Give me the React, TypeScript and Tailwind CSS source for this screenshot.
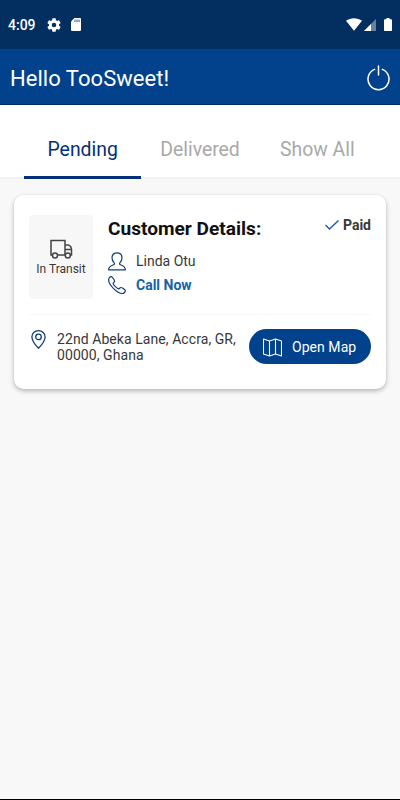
/**
 * Delivery driver home screen: status bar, greeting header, tabs and an order card
 */

interface Order {
  status: string;
  customer: string;
  address: string;
  payment: string;
}

const tabs = ["Pending", "Delivered", "Show All"];

const order: Order = {
  status: "In Transit",
  customer: "Linda Otu",
  address: "22nd Abeka Lane, Accra, GR, 00000, Ghana",
  payment: "Paid",
};

function StatusBar() {
  return (
    <div className="flex h-[49px] shrink-0 items-center bg-[#022f60] pt-px pr-2 pl-2 text-white">
      <span className="w-[39px] text-[14px] leading-4 font-medium whitespace-nowrap">4:09</span>
      {/* Settings */}
      <svg className="-mt-px h-[14px] w-[14px]" viewBox="2 2 20 20" fill="currentColor">
        <path d="M19.14 12.94c.04-.3.06-.61.06-.94s-.02-.64-.07-.94l2.03-1.58a.49.49 0 0 0 .12-.61l-1.92-3.32a.49.49 0 0 0-.59-.22l-2.39.96a7 7 0 0 0-1.62-.94l-.36-2.54a.48.48 0 0 0-.48-.41h-3.84a.47.47 0 0 0-.47.41l-.36 2.54c-.59.24-1.13.57-1.62.94l-2.39-.96a.48.48 0 0 0-.59.22L2.74 8.87a.47.47 0 0 0 .12.61l2.03 1.58a7 7 0 0 0 0 1.88l-2.03 1.58a.49.49 0 0 0-.12.61l1.92 3.32c.12.22.37.29.59.22l2.39-.96c.5.38 1.03.7 1.62.94l.36 2.54c.05.24.24.41.48.41h3.84c.24 0 .44-.17.47-.41l.36-2.54a7 7 0 0 0 1.62-.94l2.39.96c.22.08.47 0 .59-.22l1.92-3.32a.47.47 0 0 0-.12-.61zM12 15.3a3.3 3.3 0 1 1 0-6.6 3.3 3.3 0 0 1 0 6.6z" />
      </svg>
      {/* SD card */}
      <svg className="-mt-px ml-[10px] h-[13px] w-[10px]" viewBox="0 0 10 13">
        <path fill="currentColor" d="M3.4 0H9a1 1 0 0 1 1 1v11a1 1 0 0 1-1 1H1a1 1 0 0 1-1-1V3.4z" />
        <path stroke="#022f60" strokeWidth=".8" d="M4 1.5v2.7M6 1.5v2.7M8 1.5v2.7" />
      </svg>
      {/* Wifi, signal and battery */}
      <svg className="-mt-px ml-auto h-[13px] w-[16px]" viewBox="0 0 16 13" fill="currentColor">
        <path d="M0 2.8C4.5-.7 11.5-.7 16 2.8L8 12.8z" />
      </svg>
      <svg className="ml-[2px] h-[12px] w-[12px]" viewBox="0 0 12 12" fill="currentColor">
        <path opacity=".4" d="M0 12 12 0v12z" />
        <path d="M0 12 7 5v7z" />
      </svg>
      <svg className="-mt-px ml-[8px] h-[13px] w-[8px]" viewBox="0 0 8 13" fill="currentColor">
        <path d="M2.4 0h3.2v1.3h1.6a.8.8 0 0 1 .8.8v10.1a.8.8 0 0 1-.8.8H.8a.8.8 0 0 1-.8-.8V2.1a.8.8 0 0 1 .8-.8h1.6z" />
      </svg>
    </div>
  );
}

function Header() {
  return (
    <header className="flex h-[56px] shrink-0 items-center justify-between border-b border-[#022566] bg-[#02418c] px-[10px] pt-[3px] text-white">
      <h1 className="pt-[2px] text-[22px] leading-7 tracking-[0.04px]">Hello TooSweet!</h1>
      <svg className="h-[26px] w-[23px]" viewBox="0 0 23 26" fill="none" stroke="currentColor" strokeWidth="1.5" strokeLinecap="round">
        <path d="M7.6 4.4a10.5 10.5 0 1 0 7.8 0" />
        <path d="M11.5 1v9" />
      </svg>
    </header>
  );
}

function Tabs() {
  return (
    <nav className="flex h-[74px] shrink-0 items-end border-b-2 border-[#f1f1f1] bg-white px-6 text-center text-[19.4px]">
      {tabs.map((tab, index) => (
        <div
          key={tab}
          className={
            index === 0
              ? "-mb-[2px] h-[59px] flex-1 border-b-[3px] border-[#02307a] pt-[15px] leading-[30px] text-[#02307a]"
              : "-mb-[2px] h-[59px] flex-1 pt-[15px] leading-[30px] text-[#a9a9a9]"
          }
        >
          {tab}
        </div>
      ))}
    </nav>
  );
}

function OrderCard({ order }: { order: Order }) {
  return (
    <section className="mx-[14px] mt-[16px] h-[194px] rounded-[10px] bg-white px-[15px] pt-5 text-[#383838] shadow-[0_2px_5px_rgba(0,0,0,0.28)]">
      <div className="flex h-[100px] border-b border-[#f8f8f8]">
        <div className="flex h-[84px] w-[64px] flex-col items-center rounded-[4px] bg-[#f7f7f7] pt-[24px]">
          <svg className="h-[20px] w-[23px]" viewBox="0 0 23 20" fill="none" stroke="#444" strokeWidth="1.5">
            <path d="M2.5 16H1V1.5h14V16M7.5 16h7.8M15 6h3c2 0 3.500 2.500 3.500 4.500V16h-1.200M15 10.5h6.5" />
            <circle cx="5" cy="16.500" r="2.500" />
            <circle cx="17.800" cy="16.500" r="2.500" />
          </svg>
          <span className="mt-[2px] text-[12px] leading-4 whitespace-nowrap">{order.status}</span>
        </div>

        <div className="ml-[15px] flex-1">
          <h2 className="pt-px text-[19.1px] leading-[26px] font-bold whitespace-nowrap text-[#111]">Customer Details:</h2>
          <div className="mt-[7px] flex h-6 items-center">
            <svg className="h-[19px] w-[18px]" viewBox="0 0 18 19" fill="none" stroke="#123e7d" strokeWidth="1.2" strokeLinejoin="round">
              <path d="M9 .8c3.2 0 5 2.100 5 5 0 2.300-.9 4-2.100 5-.5.600-.5 1.400.1 1.800 1.100.7 5.400 1.300 5.400 5.200H.6c0-3.900 4.300-4.500 5.400-5.200.6-.4.6-1.200.1-1.800C4.900 9.800 4 8.100 4 5.800c0-2.900 1.800-5 5-5z" />
            </svg>
            <span className="ml-[10px] text-[14px]">{order.customer}</span>
          </div>
          <div className="flex h-6 items-center">
            <svg className="h-[18px] w-[18px]" viewBox="0 0 18 18" fill="none" stroke="#123e7d" strokeWidth="1.2" strokeLinejoin="round">
              <path d="M3.3.7C2.200.7.6 2.100.6 3.600c0 2.600 2 6.100 5 9 2.900 2.900 6.300 4.900 8.900 4.900 1.500 0 2.900-1.700 2.900-2.700 0-.9-3.400-3.300-4.600-3.300-1 0-1.400 1.400-2.300 1.400-1.100 0-5.400-4.300-5.400-5.400 0-.9 1.500-1.200 1.500-2.300C6.600 4 4.200.7 3.300.7z" />
            </svg>
            <a className="ml-[10px] text-[14px] font-bold text-[#1761a8]">Call Now</a>
          </div>
        </div>

        <div className="flex h-5 items-center">
          <svg className="-mt-px h-[10px] w-[14px]" viewBox="0 0 14 10" fill="none" stroke="#1b5ca5" strokeWidth="1.4">
            <path d="m.5 5 4 4 9-8.500" />
          </svg>
          <span className="ml-1 text-[14px] font-bold">{order.payment}</span>
        </div>
      </div>

      <div className="flex pt-[14px]">
        <svg className="mt-px ml-[2px] h-[19px] w-[15px]" viewBox="0 0 15 19" fill="none" stroke="#123e7d" strokeWidth="1.3" strokeLinejoin="round">
          <path d="M7.5.7C3.700.7.9 3.300.9 6.900c0 3.700 4.300 8.900 6.600 11.300 2.300-2.400 6.600-7.600 6.600-11.300 0-3.600-2.800-6.200-6.600-6.200z" />
          <circle cx="7.5" cy="6.900" r="2.800" />
        </svg>
        <p className="ml-[11px] w-[192px] pt-[2px] text-[14px] leading-4 tracking-[0.07px]">{order.address}</p>
        <button className="flex h-[35px] w-[122px] shrink-0 items-center rounded-full bg-[#02418c] pt-px pl-[14px] text-[14px] tracking-[0.05px] whitespace-nowrap text-white">
          <svg className="h-[19px] w-[19px]" viewBox="0 0 19 19" fill="none" stroke="currentColor" strokeWidth="1.1" strokeLinejoin="round">
            <path d="M.5 1 6.500 3l6-2 6 2v15l-6-2-6 2-6-2zM6.500 3v15M12.500 1v15" />
          </svg>
          <span className="ml-[10px] pt-px">Open Map</span>
        </button>
      </div>
    </section>
  );
}

export default function App() {
  return (
    <div className="flex h-[800px] w-[400px] flex-col overflow-hidden border-b border-black bg-[#f8f8f8] font-[Roboto,sans-serif]">
      <StatusBar />
      <Header />
      <Tabs />
      <OrderCard order={order} />
    </div>
  );
}
